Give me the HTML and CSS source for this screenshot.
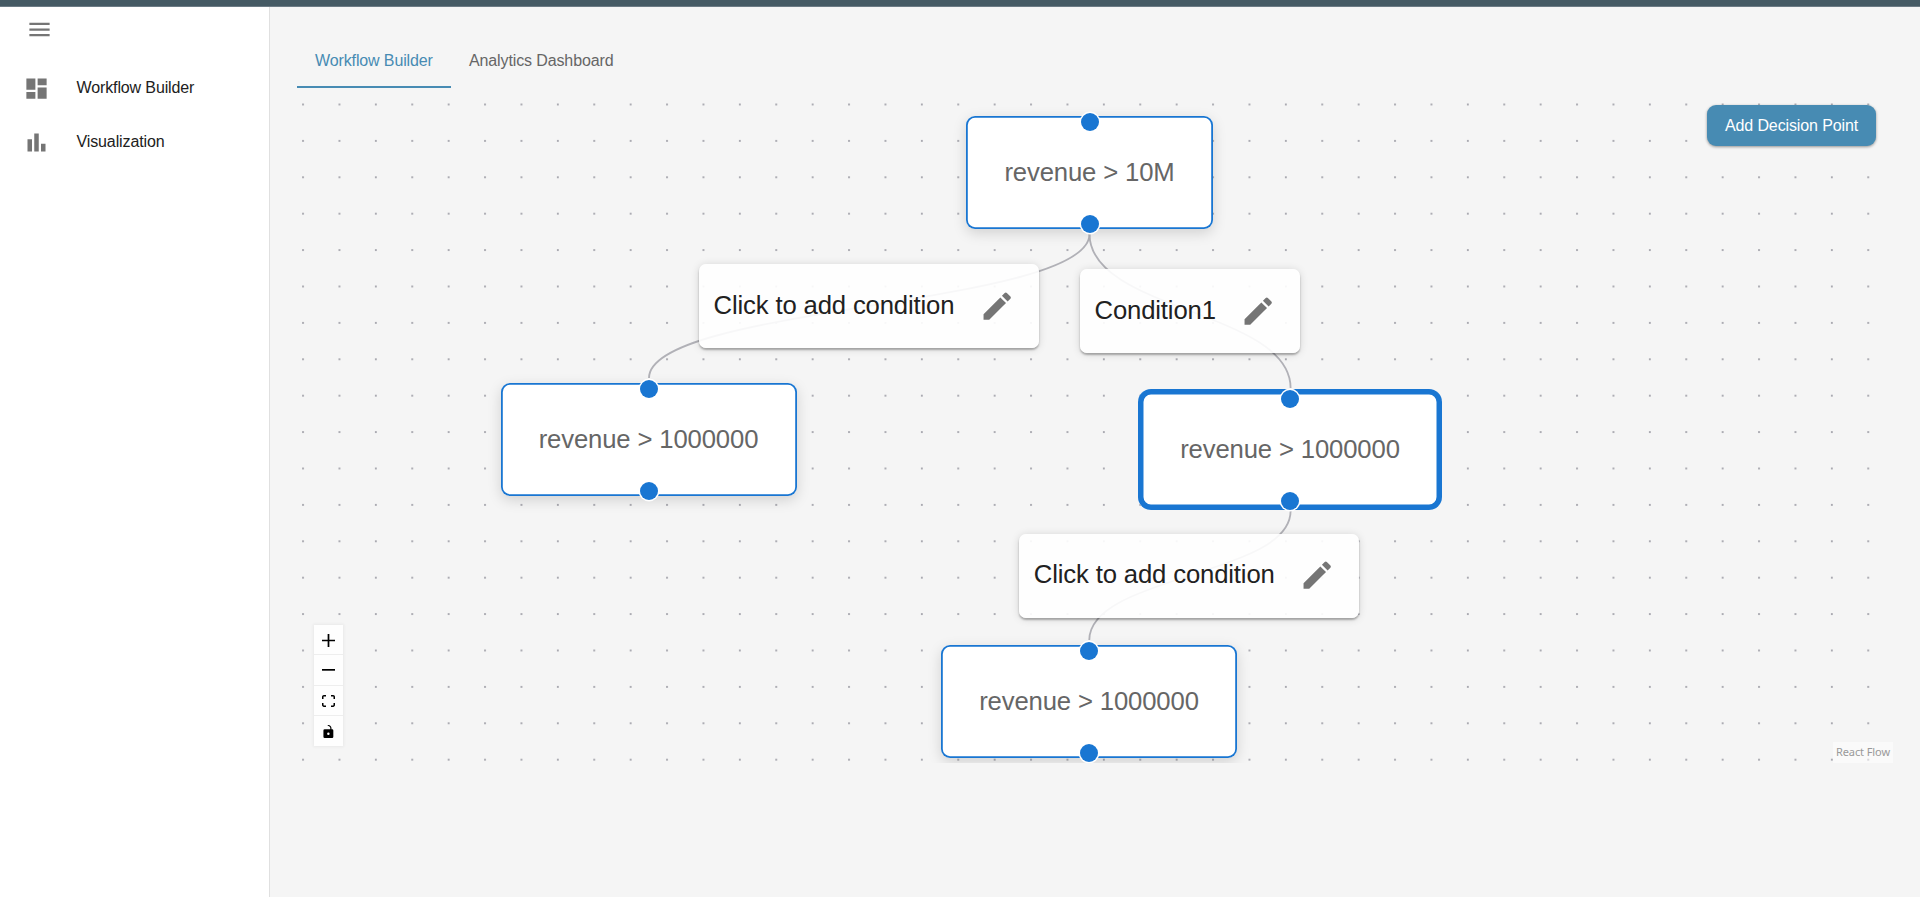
FILE: index.html
```html
<!DOCTYPE html>
<html lang="en">
<head>
<meta charset="utf-8">
<title>Workflow Builder</title>
<link rel="stylesheet" href="styles.css">
</head>
<body>
<div class="topbar"></div>
<div class="shell">
  <nav class="sidebar">
    <button class="menu" aria-label="Menu"><svg class="icon" viewBox="0 0 24 24"><path d="M3 18h18v-2H3v2zm0-5h18v-2H3v2zm0-7v2h18V6H3z"/></svg></button>
    <a class="nav-item"><svg class="icon" viewBox="0 0 24 24"><path d="M3 13h8V3H3v10zm0 8h8v-6H3v6zm10 0h8V11h-8v10zm0-18v6h8V3h-8z"/></svg><span>Workflow Builder</span></a>
    <a class="nav-item"><svg class="icon" viewBox="0 0 24 24"><path d="M4 9h4v11H4zm12 4h4v7h-4zm-6-9h4v16h-4z"/></svg><span>Visualization</span></a>
  </nav>
  <main class="main">
    <div class="tabs">
      <div class="tab tab-active">Workflow Builder</div>
      <div class="tab">Analytics Dashboard</div>
    </div>
    <div class="canvas">
      <svg class="layer" width="1596" height="675">
        <defs>
          <pattern id="dots" x="5.1" y="15.5" width="36.4" height="36.4" patternUnits="userSpaceOnUse"><circle cx="0.95" cy="0.95" r="0.95" fill="#91919a"/></pattern>
        </defs>
        <rect width="1596" height="675" fill="url(#dots)"/>
        <g class="edges">
          <path d="M792.5 146C792.5 218 352 218 352 290"/>
          <path d="M792.5 146C792.5 223 993.6 223 993.6 300"/>
          <path d="M993.6 423C993.6 487.500 792.3 487.500 792.3 552"/>
        </g>
      </svg>

      <div class="node node-root">revenue &gt; 10M<i class="handle handle-top"></i><i class="handle handle-bottom"></i></div>
      <div class="node node-left">revenue &gt; 1000000<i class="handle handle-top"></i><i class="handle handle-bottom"></i></div>
      <div class="node node-right">revenue &gt; 1000000<i class="handle handle-top"></i><i class="handle handle-bottom"></i></div>
      <div class="node node-leaf">revenue &gt; 1000000<i class="handle handle-top"></i><i class="handle handle-bottom"></i></div>

      <div class="label label-a"><span>Click to add condition</span><svg class="pencil" viewBox="0 0 24 24"><path d="M3 17.250V21h3.750L17.810 9.940l-3.750-3.750L3 17.250zM20.710 7.040c.39-.39.39-1.020 0-1.410l-2.340-2.340a.9959.9959 0 0 0-1.410 0l-1.830 1.830 3.750 3.750 1.830-1.830z"/></svg></div>
      <div class="label label-b"><span>Condition1</span><svg class="pencil" viewBox="0 0 24 24"><path d="M3 17.250V21h3.750L17.810 9.940l-3.750-3.750L3 17.250zM20.710 7.040c.39-.39.39-1.020 0-1.410l-2.340-2.340a.9959.9959 0 0 0-1.410 0l-1.830 1.830 3.750 3.750 1.830-1.830z"/></svg></div>
      <div class="label label-c"><span>Click to add condition</span><svg class="pencil" viewBox="0 0 24 24"><path d="M3 17.250V21h3.750L17.810 9.940l-3.750-3.750L3 17.250zM20.710 7.040c.39-.39.39-1.020 0-1.410l-2.340-2.340a.9959.9959 0 0 0-1.410 0l-1.830 1.830 3.750 3.750 1.830-1.830z"/></svg></div>

      <button class="add">Add Decision Point</button>

      <div class="controls">
        <button aria-label="Zoom in"><svg viewBox="0 0 32 32"><path d="M32 18.133H18.133V32h-4.266V18.133H0v-4.266h13.867V0h4.266v13.867H32z"/></svg></button>
        <button aria-label="Zoom out"><svg viewBox="0 0 32 5"><path d="M0 0h32v4.200H0z"/></svg></button>
        <button aria-label="Fit view"><svg viewBox="0 0 32 30"><path d="M3.692 4.630c0-.53.400-.938.939-.938h5.215V0H4.708C2.130 0 0 2.054 0 4.630v5.216h3.692V4.631zM27.354 0h-5.200v3.692h5.170c.53 0 .984.400.984.939v5.215H32V4.631A4.624 4.624 0 0027.354 0zm.954 24.830c0 .532-.400.940-.939.940h-5.215v3.768h5.215c2.577 0 4.631-2.130 4.631-4.707v-5.139h-3.692v5.139zm-23.677.940c-.531 0-.939-.400-.939-.940v-5.138H0v5.139c0 2.577 2.130 4.707 4.708 4.707h5.138V25.770H4.631z"/></svg></button>
        <button aria-label="Lock"><svg viewBox="0 0 25 32"><path d="M21.333 10.667H19.810V7.619C19.810 3.429 16.380 0 12.190 0c-4.114 1.828-1.370 2.133.305 2.438 1.676.305 4.420 2.590 4.420 5.181v3.048H3.047A3.056 3.056 0 000 13.714v15.238A3.056 3.056 0 003.048 32h18.285a3.056 3.056 0 003.048-3.048V13.714a3.056 3.056 0 00-3.048-3.047zM12.190 24.533a3.056 3.056 0 01-3.047-3.047 3.056 3.056 0 013.047-3.048 3.056 3.056 0 013.048 3.048 3.056 3.056 0 01-3.048 3.047z"/></svg></button>
      </div>
      <div class="attribution">React Flow</div>
    </div>
  </main>
</div>
</body>
</html>
```
FILE: styles.css
```css
* { box-sizing: border-box; }
body {
  margin: 0;
  height: 897px;
  overflow: hidden;
  display: flex;
  flex-direction: column;
  background: #f5f5f5;
  font-family: "Liberation Sans", Arial, sans-serif;
  font-size: 16px;
  letter-spacing: -.12px;
  color: #212121;
}
button { font: inherit; letter-spacing: inherit; border: 0; padding: 0; margin: 0; background: none; }
.topbar { height: 7px; flex: none; background: #455a64; border-bottom: 1px solid #6c7b85; }
.shell { flex: 1; display: flex; }
.sidebar { width: 270px; flex: none; background: #fff; border-right: 1px solid #e0e0e0; padding-top: 9px; }
.icon { width: 27px; height: 27px; fill: #757575; display: block; flex: none; }
.menu { display: block; margin: 0 0 18px 26px; }
.nav-item { display: flex; align-items: center; height: 54px; padding-left: 22.5px; gap: 27px; line-height: 26px; }
.main { flex: 1; padding: 27px 27px 0; }
.tabs { display: flex; height: 54px; }
.tab { padding: 0 18px; line-height: 53px; color: #666; white-space: nowrap; }
.tab-active { width: 154px; color: #478bb3; border-bottom: 2px solid #478bb3; }
.canvas { position: relative; width: 1596px; height: 675px; overflow: hidden; }
.layer { position: absolute; left: 0; top: 0; }
.edges path { fill: none; stroke: #b1b1b7; stroke-width: 1.82; }

.node {
  position: absolute;
  display: flex;
  align-items: center;
  justify-content: center;
  background: #fff;
  border-radius: 9px;
  box-shadow: inset 0 0 0 1.8px #1976d2, 0 4px 14px rgba(0, 0, 0, .15);
  color: #666;
  font-size: 25.7px;
  letter-spacing: -.15px;
  white-space: nowrap;
}
.node-root { left: 669px; top: 28px; width: 247px; height: 113px; }
.node-left { left: 203.500px; top: 295.200px; width: 296px; height: 113px; line-height: 28px; padding-bottom: 1px; }
.node-right { left: 841px; top: 301px; width: 304px; height: 121px; border-radius: 13px; box-shadow: inset 0 0 0 5.500px #1976d2; }
.node-leaf { left: 644px; top: 557px; width: 296px; height: 113px; }
.handle {
  position: absolute;
  left: 50%;
  width: 18px;
  height: 18px;
  margin-left: -9px;
  border-radius: 50%;
  background: #1976d2;
  box-shadow: 0 0 0 1.400px #fff;
}
.handle-top { top: -3.300px; }
.handle-bottom { bottom: -3.700px; }
.node-right .handle { margin-left: -8.600px; }
.node-right .handle-top { top: .600px; }
.node-right .handle-bottom { bottom: .400px; }

.label {
  position: absolute;
  display: flex;
  align-items: center;
  justify-content: space-between;
  width: 340px;
  height: 84px;
  padding: 0 24px 0 14.500px;
  border-radius: 7px;
  background: rgba(255, 255, 255, .9);
  box-shadow: 0 2px 2px rgba(0, 0, 0, .28), 0 1px 8px rgba(0, 0, 0, .14);
  font-size: 25.7px;
  letter-spacing: -.15px;
  white-space: nowrap;
}
.label span { position: relative; top: -1px; }
.label-a { left: 402px; top: 176px; }
.label-b { left: 783px; top: 181px; width: 220px; }
.label-c { left: 722.300px; top: 445.500px; }
.pencil { width: 36.400px; height: 36.400px; fill: #757575; flex: none; }

.add {
  position: absolute;
  left: 1410px;
  top: 17px;
  width: 169px;
  height: 41px;
  border-radius: 9px;
  background: #478bb3;
  color: #fff;
  box-shadow: 0 1px 3px rgba(0, 0, 0, .4);
}
.controls {
  position: absolute;
  left: 17px;
  top: 537px;
  width: 29px;
  display: flex;
  flex-direction: column;
  box-shadow: 0 0 3px 1px rgba(0, 0, 0, .05);
}
.controls button { height: 30px; padding-top: 1px; display: flex; align-items: center; justify-content: center; background: #fefefe; border-bottom: 1px solid #eee; }
.controls button:nth-child(2) { height: 31px; }
.controls button:last-child { border-bottom: 0; }
.controls svg { width: 13px; max-height: 13px; fill: #000; }
.attribution {
  position: absolute;
  right: 0;
  bottom: 0;
  width: 60px;
  height: 21px;
  background: rgba(255, 255, 255, .5);
  color: #999;
  font: 11px/20px "Noto Sans", sans-serif;
  letter-spacing: -.1px;
  text-align: center;
}
```
